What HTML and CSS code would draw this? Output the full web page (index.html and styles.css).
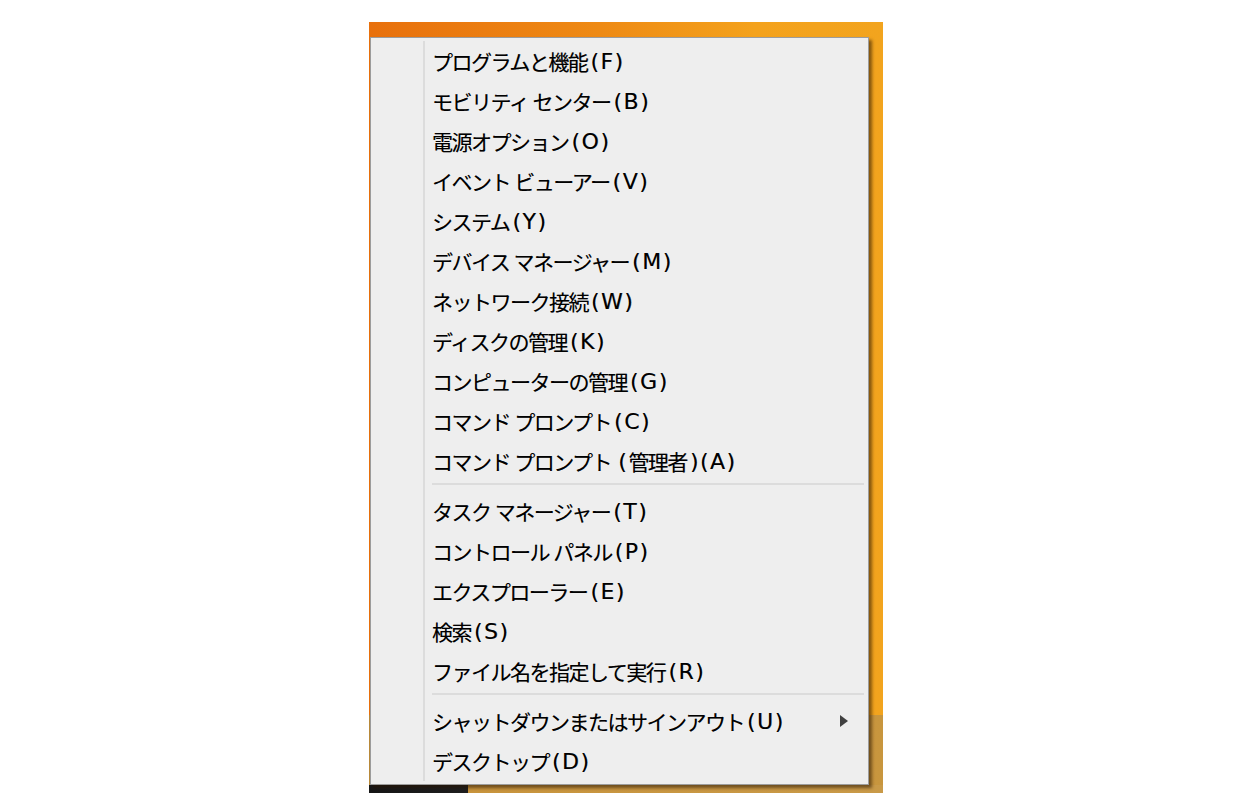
FILE: index.html
```html
<!DOCTYPE html>
<html lang="ja">
<head>
<meta charset="utf-8">
<title>Win+X メニュー</title>
<link rel="stylesheet" href="styles.css">
</head>
<body>
<div class="desktop">
  <div class="menu">
    <div class="items">
      <div class="item">プログラムと機能<span class="key">(F)</span></div>
      <div class="item">モビリティ センター<span class="key">(B)</span></div>
      <div class="item">電源オプション<span class="key">(O)</span></div>
      <div class="item">イベント ビューアー<span class="key">(V)</span></div>
      <div class="item">システム<span class="key">(Y)</span></div>
      <div class="item">デバイス マネージャー<span class="key">(M)</span></div>
      <div class="item">ネットワーク接続<span class="key">(W)</span></div>
      <div class="item">ディスクの管理<span class="key">(K)</span></div>
      <div class="item">コンピューターの管理<span class="key">(G)</span></div>
      <div class="item">コマンド プロンプト<span class="key">(C)</span></div>
      <div class="item">コマンド プロンプト <span class="key">(</span>管理者<span class="key">)(A)</span></div>
      <div class="sep"></div>
      <div class="item">タスク マネージャー<span class="key">(T)</span></div>
      <div class="item">コントロール パネル<span class="key">(P)</span></div>
      <div class="item">エクスプローラー<span class="key">(E)</span></div>
      <div class="item">検索<span class="key">(S)</span></div>
      <div class="item">ファイル名を指定して実行<span class="key">(R)</span></div>
      <div class="sep"></div>
      <div class="item">シャットダウンまたはサインアウト<span class="key">(U)</span><span class="arrow"></span></div>
      <div class="item">デスクトップ<span class="key">(D)</span></div>
    </div>
  </div>
</div>
</body>
</html>
```
FILE: styles.css
```css
html, body {
  margin: 0;
  padding: 0;
  background: #ffffff;
}

.desktop {
  position: relative;
  margin: 22px 0 0 369px;
  width: 514px;
  height: 771px;
  background:
    linear-gradient(90deg, #161616 0, #1e1e1e 99px, #c8943c 99px, #c99a48 100%) left bottom / 100% 8px no-repeat,
    linear-gradient(90deg, #b98a3a, #c8963e) right bottom / 100% 78px no-repeat,
    linear-gradient(90deg, #e8700c 0%, #ee8a14 45%, #f4a21c 75%, #f2a41e 100%);
}

.menu {
  position: absolute;
  left: 1px;
  top: 15px;
  width: 499px;
  box-sizing: border-box;
  background: #eeeeee;
  border: 1px solid #9c9c9c;
  padding: 3px 0 3px 0;
  box-shadow: 3px 3px 3px rgba(40, 20, 0, 0.55);
}

.items {
  margin-left: 52px;
  border-left: 2px solid #dcdcdc;
  padding-left: 7px;
}

.item {
  display: flex;
  align-items: center;
  height: 40px;
  font-family: "Noto Sans CJK JP", sans-serif;
  font-size: 21px;
  font-weight: 400;
  letter-spacing: -1.5px;
  word-spacing: 1px;
  color: #000000;
  white-space: pre;
  text-shadow: 0.3px 0 0 rgba(0, 0, 0, 0.4);
}

.key {
  font-family: "DejaVu Sans", sans-serif;
  font-size: 22px;
  font-weight: 400;
  letter-spacing: 1.5px;
  margin-left: 3px;
}

.arrow {
  margin-left: auto;
  margin-right: 20px;
  width: 0;
  height: 0;
  border-left: 8px solid #404040;
  border-top: 6px solid transparent;
  border-bottom: 6px solid transparent;
}

.sep {
  height: 2px;
  margin: 2px 4px 6px 0;
  background: #dcdcdc;
}
```
